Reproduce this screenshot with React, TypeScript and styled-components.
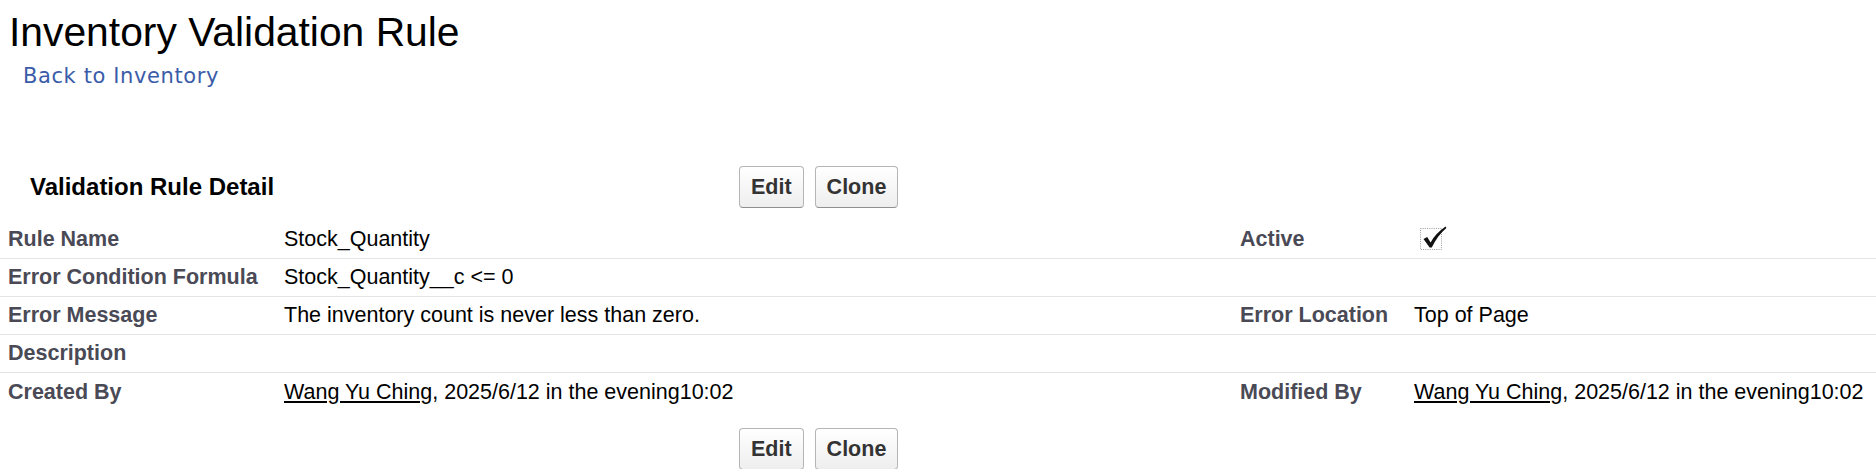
import React from 'react';
import styled, { createGlobalStyle } from 'styled-components';

const GlobalStyle = createGlobalStyle`
  body {
    margin: 0;
    background: #fff;
    font-family: "Liberation Sans", Arial, sans-serif;
    color: #000;
  }
`;

type DetailRow = {
  label: string;
  value?: React.ReactNode;
  label2?: string;
  value2?: React.ReactNode;
};

const CheckedBox: React.FC = () => (
  <svg width="27" height="26" viewBox="0 0 27 26" aria-label="checked">
    <rect
      x="0.5"
      y="3.5"
      width="21"
      height="21"
      fill="none"
      stroke="#9a9a9a"
      strokeDasharray="1 1.2"
    />
    <path
      d="M3.5 14 L7.2 12 L10.6 17.4 Q15.5 8.5 25.6 1.6 L26.4 3 Q17.5 10.5 11.8 22.6 L9.6 22.6 Z"
      fill="#111"
    />
  </svg>
);

const UserStamp: React.FC<{ name: string; stamp: string }> = ({ name, stamp }) => (
  <>
    <UserLink href="#">{name}</UserLink>, {stamp}
  </>
);

const rows: DetailRow[] = [
  { label: 'Rule Name', value: 'Stock_Quantity', label2: 'Active', value2: <CheckedBox /> },
  { label: 'Error Condition Formula', value: 'Stock_Quantity__c <= 0' },
  {
    label: 'Error Message',
    value: 'The inventory count is never less than zero.',
    label2: 'Error Location',
    value2: 'Top of Page',
  },
  { label: 'Description' },
  {
    label: 'Created By',
    value: <UserStamp name="Wang Yu Ching" stamp="2025/6/12 in the evening10:02" />,
    label2: 'Modified By',
    value2: <UserStamp name="Wang Yu Ching" stamp="2025/6/12 in the evening10:02" />,
  },
];

const ButtonBar: React.FC = () => (
  <Buttons>
    <Button type="button">Edit</Button>
    <Button type="button">Clone</Button>
  </Buttons>
);

const App: React.FC = () => {
  return (
    <Page>
      <GlobalStyle />
      <Title>Inventory Validation Rule</Title>
      <BackLink href="#">Back to Inventory</BackLink>
      <Header>
        <SectionTitle>Validation Rule Detail</SectionTitle>
        <ButtonBar />
      </Header>
      <Detail>
        {rows.map((row, i) => (
          <Row key={row.label} $last={i === rows.length - 1}>
            <Label>{row.label}</Label>
            <Value>{row.value}</Value>
            <Label>{row.label2}</Label>
            <Value>{row.value2}</Value>
          </Row>
        ))}
      </Detail>
      <Footer>
        <ButtonBar />
      </Footer>
    </Page>
  );
};

const Page = styled.div`
  display: flex;
  flex-direction: column;
  width: 1876px;
  padding-top: 8px;
`;

const Title = styled.h1`
  margin: 0;
  padding-left: 9px;
  font-family: "Liberation Sans", Arial, sans-serif;
  font-weight: normal;
  font-size: 40.8px;
  line-height: 48px;
  color: #000;
`;

const BackLink = styled.a`
  align-self: flex-start;
  margin: 7px 0 0 23px;
  font-family: "DejaVu Sans", Verdana, sans-serif;
  font-size: 21px;
  line-height: 26px;
  letter-spacing: 0.6px;
  color: #3b5ca8;
  text-decoration: none;
`;

const Header = styled.div`
  display: flex;
  align-items: center;
  margin-top: 77px;
  height: 42px;
`;

const SectionTitle = styled.h2`
  flex: 0 0 739px;
  box-sizing: border-box;
  margin: 0;
  padding-left: 30px;
  font-size: 24px;
  font-weight: bold;
  color: #000;
`;

const Buttons = styled.div`
  display: flex;
  gap: 11px;
`;

const Button = styled.button`
  box-sizing: border-box;
  height: 42px;
  padding: 0 11px;
  border: 1px solid #b5b5b5;
  border-bottom-color: #8f8f8f;
  border-radius: 4px;
  background: linear-gradient(#ffffff, #eeeeee);
  font-family: "Liberation Sans", Arial, sans-serif;
  font-size: 21.5px;
  font-weight: bold;
  color: #333;
  cursor: pointer;
`;

const Detail = styled.div`
  display: flex;
  flex-direction: column;
  margin-top: 13px;
`;

const Row = styled.div<{ $last?: boolean }>`
  display: grid;
  grid-template-columns: 276px 956px 174px 1fr;
  align-items: center;
  box-sizing: border-box;
  height: 38px;
  border-bottom: ${(p) => (p.$last ? 'none' : '1px solid #e4e4e4')};
`;

const Label = styled.div`
  padding-left: 8px;
  font-size: 21.5px;
  font-weight: bold;
  color: #4a4a56;
  white-space: nowrap;
`;

const Value = styled.div`
  display: flex;
  align-items: center;
  padding-left: 8px;
  font-size: 21.5px;
  color: #000;
  white-space: nowrap;

  svg {
    margin: -4px 0 0 6px;
  }
`;

const UserLink = styled.a`
  color: #000;
  text-decoration: underline;
`;

const Footer = styled.div`
  display: flex;
  margin-top: 17px;
  padding-left: 739px;
`;

export default App;
